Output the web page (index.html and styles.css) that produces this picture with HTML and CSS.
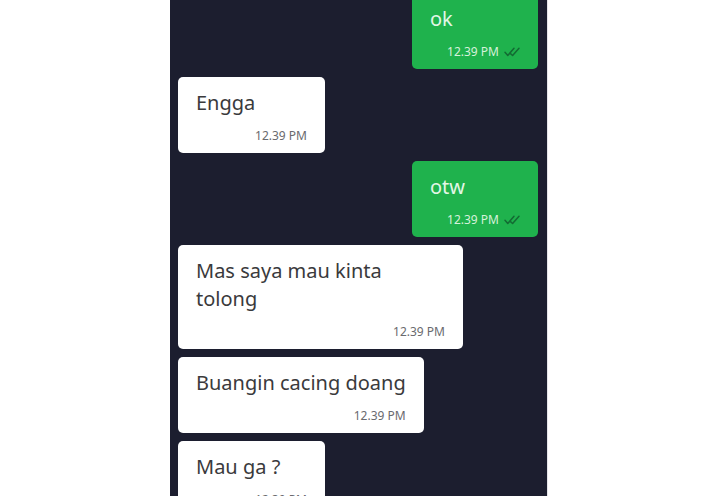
FILE: index.html
```html
<!DOCTYPE html>
<html lang="id">
<head>
    <meta charset="UTF-8">
    <title>Chat</title>
    <link rel="stylesheet" href="styles.css">
</head>
<body>
    <div class="phone">
        <div class="chat">
            <div class="msg out">
                <div class="text">ok</div>
                <div class="meta">12.39 PM
                    <svg class="ticks" width="18" height="10" viewBox="0 0 18 10"><path d="M1 5.2 L3.8 8.5 L10 1.2 M6.8 6.9 L8.6 8.5 L15 1.2" fill="none" stroke="#136b33" stroke-width="1.5" stroke-linecap="round" stroke-linejoin="round"/></svg>
                </div>
            </div>
            <div class="msg in">
                <div class="text">Engga</div>
                <div class="meta">12.39 PM</div>
            </div>
            <div class="msg out">
                <div class="text">otw</div>
                <div class="meta">12.39 PM
                    <svg class="ticks" width="18" height="10" viewBox="0 0 18 10"><path d="M1 5.2 L3.8 8.5 L10 1.2 M6.8 6.9 L8.6 8.5 L15 1.2" fill="none" stroke="#136b33" stroke-width="1.5" stroke-linecap="round" stroke-linejoin="round"/></svg>
                </div>
            </div>
            <div class="msg in wide">
                <div class="text">Mas saya mau kinta tolong</div>
                <div class="meta">12.39 PM</div>
            </div>
            <div class="msg in">
                <div class="text">Buangin cacing doang</div>
                <div class="meta">12.39 PM</div>
            </div>
            <div class="msg in">
                <div class="text">Mau ga ?</div>
                <div class="meta">12.39 PM</div>
            </div>
        </div>
    </div>
</body>
</html>
```

FILE: styles.css
```css
body {
    margin: 0;
    background-color: #fff;
    font-family: 'Noto Sans', sans-serif;
}

.phone {
    margin-left: 170px;
    width: 377px;
    height: 496px;
    overflow: hidden;
    background-color: #1c1e2f;
    box-shadow: 1px 0 0 #e4e4e8;
}

.chat {
    display: flex;
    flex-direction: column;
    gap: 8px;
    padding: 0 9px 0 8px;
    margin-top: -7px;
}

.msg {
    box-sizing: border-box;
    min-width: 147px;
    max-width: 285px;
    padding: 12px 18px 9px;
    border-radius: 5px;
}

.msg.in {
    align-self: flex-start;
    background-color: #fff;
    color: #3a3a3c;
}

.msg.out {
    align-self: flex-end;
    min-width: 126px;
    padding-right: 16px;
    background-color: #1fb24d;
    color: #e2f6e6;
}

.msg.wide {
    width: 285px;
}

.msg.wide .text {
    max-width: 200px;
}

.text {
    font-size: 20px;
    line-height: 28px;
}

.meta {
    margin-top: 11px;
    display: flex;
    justify-content: flex-end;
    align-items: center;
    gap: 5px;
    font-size: 12px;
    line-height: 16px;
    color: #6a6a6e;
}

.msg.out .meta {
    color: #d6f1db;
}
```
